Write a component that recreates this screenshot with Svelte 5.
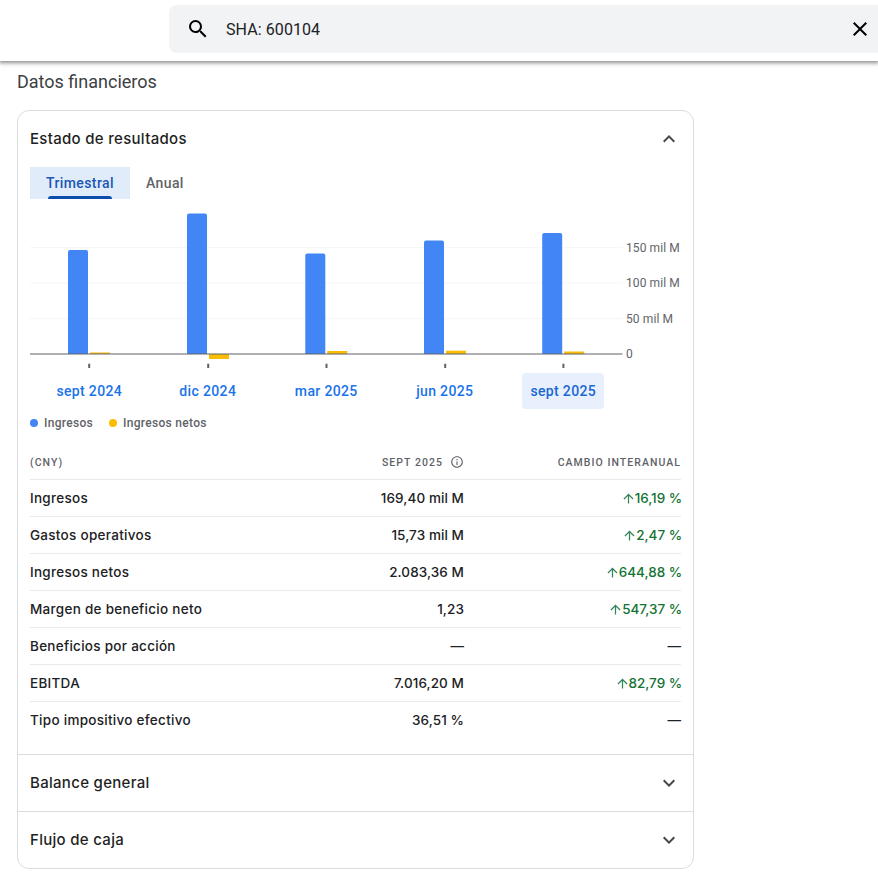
<script>
  const BASE = 154;
  const W = 592.5;
  const quarters = [
    { label: 'sept 2024', x: 38, rev: 104, net: 1.5 },
    { label: 'dic 2024', x: 157, rev: 140.5, net: -5 },
    { label: 'mar 2025', x: 275.3, rev: 100.5, net: 3 },
    { label: 'jun 2025', x: 394, rev: 113.5, net: 3.3 },
    { label: 'sept 2025', x: 512.2, rev: 121, net: 2.5, selected: true }
  ];
  const grid = [
    { y: 47.7, label: '150 mil M' },
    { y: 83, label: '100 mil M' },
    { y: 118.7, label: '50 mil M' }
  ];
  const rows = [
    { name: 'Ingresos', value: '169,40 mil M', change: '16,19 %' },
    { name: 'Gastos operativos', value: '15,73 mil M', change: '2,47 %' },
    { name: 'Ingresos netos', value: '2.083,36 M', change: '644,88 %' },
    { name: 'Margen de beneficio neto', value: '1,23', change: '547,37 %' },
    { name: 'Beneficios por acción', value: '—', change: null },
    { name: 'EBITDA', value: '7.016,20 M', change: '82,79 %' },
    { name: 'Tipo impositivo efectivo', value: '36,51 %', change: null }
  ];
</script>

<header class="topbar">
  <div class="search">
    <svg class="search-icon" viewBox="0 0 24 24" width="24" height="24" aria-hidden="true">
      <path d="M15.5 14h-.79l-.28-.27A6.471 6.471 0 0 0 16 9.5 6.5 6.5 0 1 0 9.5 16c1.61 0 3.09-.59 4.23-1.57l.27.28v.79l5 4.99L20.49 19l-4.99-5zm-6 0C7.01 14 5 11.99 5 9.5S7.01 5 9.5 5 14 7.01 14 9.5 11.99 14 9.5 14z"/>
    </svg>
    <span class="query">SHA: 600104</span>
    <svg class="close-icon" viewBox="0 0 24 24" width="24" height="24" aria-hidden="true">
      <path d="M19 6.41 17.59 5 12 10.59 6.41 5 5 6.41 10.59 12 5 17.59 6.41 19 12 13.41 17.59 19 19 17.59 13.41 12z"/>
    </svg>
  </div>
</header>

<main class="page">
  <h2 class="title">Datos financieros</h2>

  <section class="card">
    <div class="section-head open">
      <span>Estado de resultados</span>
      <svg viewBox="0 0 24 24" width="24" height="24" aria-hidden="true">
        <path d="M12 8l-6 6 1.41 1.41L12 10.83l4.59 4.58L18 14z"/>
      </svg>
    </div>

    <div class="body">
      <div class="tabs">
        <div class="tab active">Trimestral<i></i></div>
        <div class="tab">Anual</div>
      </div>

      <svg class="chart" width="660" height="171" viewBox="0 0 660 171" role="img" aria-label="Gráfico">
        {#each grid as g}
          <line x1="0" x2={W} y1={g.y} y2={g.y} class="gridline" />
          <text x="596" y={g.y + 4.3} class="ylabel">{g.label}</text>
        {/each}
        <text x="596" y={BASE + 4.3} class="ylabel">0</text>
        {#each quarters as q}
          <path class="rev" d="M{q.x} {BASE}V{BASE - q.rev + 2}q0-2 2-2h16q2 0 2 2V{BASE}z" />
          <rect class="net" x={q.x + 22} width="20"
            y={q.net > 0 ? BASE - q.net : BASE} height={Math.abs(q.net)} />
          <rect class="tick" x={q.x + 20.2} y="163.7" width="2" height="4.3" />
        {/each}
        <line x1="0" x2={W} y1={BASE} y2={BASE} class="axis" />
      </svg>

      <div class="quarters">
        {#each quarters as q}
          <div class="quarter"><span class:selected={q.selected}>{q.label}</span></div>
        {/each}
      </div>

      <div class="legend">
        <span class="key"><i class="dot blue"></i>Ingresos</span>
        <span class="key"><i class="dot yellow"></i>Ingresos netos</span>
      </div>

      <div class="table">
        <div class="row head">
          <span>(CNY)</span>
          <span class="value-head">SEPT 2025
            <svg viewBox="0 0 24 24" width="14" height="14" aria-hidden="true">
              <path d="M11 7h2v2h-2zm0 4h2v6h-2zm1-9C6.48 2 2 6.48 2 12s4.48 10 10 10 10-4.48 10-10S17.52 2 12 2zm0 18c-4.41 0-8-3.59-8-8s3.59-8 8-8 8 3.59 8 8-3.59 8-8 8z"/>
            </svg>
          </span>
          <span class="right">CAMBIO INTERANUAL</span>
        </div>
        {#each rows as r}
          <div class="row">
            <span class="name">{r.name}</span>
            <span class="value">{r.value}</span>
            {#if r.change}
              <span class="change">
                <svg viewBox="0 0 24 24" width="15" height="15" aria-hidden="true">
                  <path d="M4 12l1.41 1.41L11 7.83V20h2V7.83l5.58 5.59L20 12l-8-8-8 8z"/>
                </svg>{r.change}
              </span>
            {:else}
              <span class="right dash">—</span>
            {/if}
          </div>
        {/each}
      </div>
    </div>

    <div class="section-head closed">
      <span>Balance general</span>
      <svg viewBox="0 0 24 24" width="24" height="24" aria-hidden="true">
        <path d="M16.59 8.59 12 13.17 7.41 8.59 6 10l6 6 6-6z"/>
      </svg>
    </div>
    <div class="section-head closed">
      <span>Flujo de caja</span>
      <svg viewBox="0 0 24 24" width="24" height="24" aria-hidden="true">
        <path d="M16.59 8.59 12 13.17 7.41 8.59 6 10l6 6 6-6z"/>
      </svg>
    </div>
  </section>
</main>

<style>
  :global(body) {
    margin: 0;
    background: #fff;
    font-family: Roboto, "Noto Sans", sans-serif;
    color: #1f1f1f;
  }
  .topbar {
    height: 61px;
    display: flex;
    justify-content: flex-end;
    align-items: flex-start;
    background: #fff;
    box-shadow: 0 1px 4px 1px rgba(60, 64, 67, 0.6);
    padding-top: 5px;
    box-sizing: border-box;
    position: relative;
  }
  .search {
    width: 709px;
    height: 48px;
    background: #f1f3f4;
    border-radius: 8px 0 0 8px;
    display: flex;
    align-items: center;
    box-sizing: border-box;
    padding: 0 6px 0 17px;
  }
  .search svg { fill: #000; flex: none; }
  .query {
    margin-left: 16px;
    flex: 1;
    font-size: 16px;
    letter-spacing: 0.08px;
    color: #202124;
  }
  .page { padding: 0 0 0 17px; }
  .title {
    margin: 0;
    padding-top: 10px;
    height: 39px;
    font-size: 18px;
    line-height: 22px;
    font-weight: 400;
    color: #3c4043;
    box-sizing: content-box;
  }
  .card {
    width: 677px;
    box-sizing: border-box;
    border: 1px solid #dadce0;
    border-radius: 12px;
    background: #fff;
  }
  .section-head {
    display: flex;
    align-items: center;
    justify-content: space-between;
    padding: 0 12px;
    font-family: Inter, Roboto, sans-serif;
    font-size: 15px;
    font-weight: 500;
    letter-spacing: 0.3px;
    color: #1f1f1f;
  }
  .section-head span { position: relative; top: -1px; }
  .section-head svg { fill: #444746; }
  .section-head.open { height: 56px; }
  .section-head.closed { height: 57px; border-top: 1px solid #dadce0; box-sizing: border-box; }
  .body { padding: 0 12px 15px; }
  .tabs { display: flex; }
  .tab {
    height: 32px;
    padding: 0 16px;
    display: flex;
    align-items: center;
    font-size: 14px;
    font-weight: 500;
    letter-spacing: 0.4px;
    color: #5f6368;
    position: relative;
  }
  .tab.active { background: #e1ecfa; color: #1b57b5; padding: 0 16px; }
  .tab i {
    position: absolute;
    left: 18px;
    right: 18px;
    bottom: 0;
    height: 3px;
    border-radius: 3px 3px 0 0;
    background: #0b4eac;
  }
  .chart { display: block; margin-right: -12px; overflow: visible; margin-top: 0.5px; margin-bottom: 2.5px; font-family: Roboto, sans-serif; }
  .gridline { stroke: #f4f5f5; stroke-width: 1; }
  .axis { stroke: #5f6368; stroke-width: 1.2; }
  .ylabel { font-size: 12px; fill: #5f6368; letter-spacing: 0.1px; }
  .rev { fill: #4285f4; }
  .net { fill: #fbbc04; }
  .tick { fill: #5f6368; }
  .quarters { display: grid; grid-template-columns: repeat(5, 118.5px); height: 36px; }
  .quarter { display: flex; justify-content: center; }
  .quarter span {
    height: 36px;
    padding: 0 8px;
    display: flex;
    align-items: center;
    border-radius: 4px;
    font-size: 14px;
    font-weight: 500;
    letter-spacing: 0.35px;
    color: #1a73e8;
  }
  .quarter span.selected { background: #e8f0fe; color: #1967d2; }
  .legend {
    display: flex;
    gap: 16px;
    margin-top: 6px;
    height: 16px;
    align-items: center;
    font-size: 12px;
    font-weight: 500;
    letter-spacing: 0.3px;
    color: #5f6368;
  }
  .key { display: flex; align-items: center; gap: 6px; }
  .dot { width: 8px; height: 8px; border-radius: 50%; display: block; }
  .dot.blue { background: #4285f4; }
  .dot.yellow { background: #fbbc04; }
  .table { margin-top: 22px; }
  .row {
    display: grid;
    grid-template-columns: 250px 184px 217px;
    height: 37px;
    align-items: center;
    box-sizing: border-box;
    border-bottom: 1px solid #e8eaed;
    font-family: Inter, Roboto, sans-serif;
    font-size: 13.5px;
    font-weight: 500;
    color: #202124;
  }
  .row:last-child { border-bottom-color: transparent; }
  .name { letter-spacing: 0.28px; }
  .row.head {
    height: 27px;
    padding-bottom: 8px;
    font-family: Roboto, sans-serif;
    font-size: 10.5px;
    letter-spacing: 1.05px;
    color: #5f6368;
  }
  .value-head { display: flex; justify-content: flex-end; align-items: center; gap: 7px; }
  .value-head svg { fill: #5f6368; }
  .value { text-align: right; letter-spacing: 0.08px; }
  .right { text-align: right; }
  .dash { color: #202124; }
  .change {
    display: flex;
    justify-content: flex-end;
    align-items: center;
    color: #137333;
    letter-spacing: -0.05px;
    margin-right: -1px;
  }
  .change svg { fill: #34845a; margin-right: -1px; }
</style>
